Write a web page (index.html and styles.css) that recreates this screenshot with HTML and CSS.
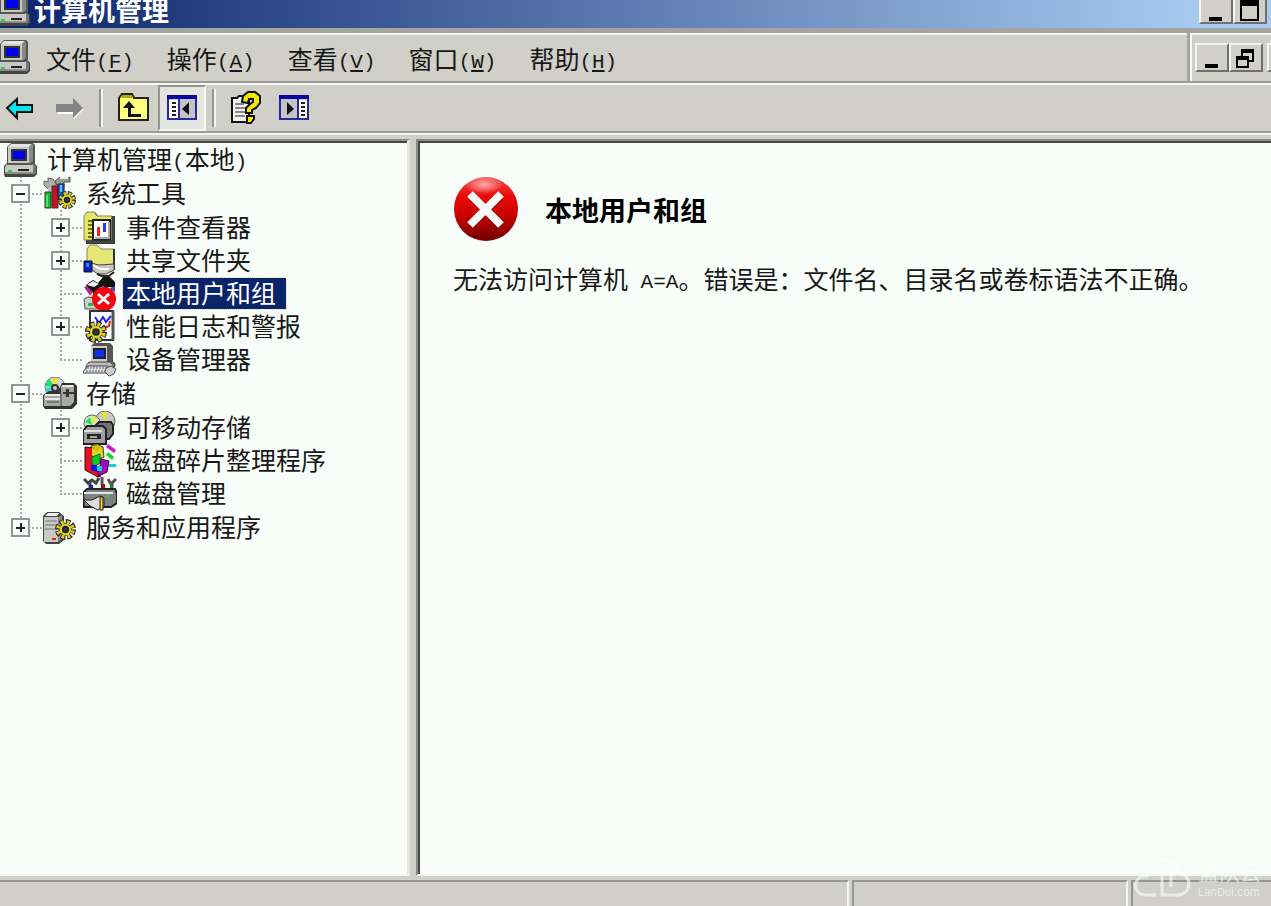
FILE: index.html
```html
<!DOCTYPE html>
<html lang="zh-CN">
  <head>
    <meta charset="UTF-8" />
    <meta name="viewport" content="width=device-width, initial-scale=1.0" />
    <title>计算机管理</title>
    <link rel="stylesheet" href="styles.css">
  </head>
  <body>
    <!-- Shared icon shapes -->
    <svg class="defs" aria-hidden="true">
      <symbol id="computer" viewBox="0 0 34 34">
        <path d="M0 23l3-3h27l3 3v8l-3 3H1l-1-3z" fill="#444" />
        <path d="M1 24l2-3h26v10H1z" fill="#c8c8c4" />
        <path d="M1 29h28v2H1z" fill="#8c8c88" />
        <path d="M29 21l3 2v7l-3 2z" fill="#777" />
        <path d="M3 4l4-4h22l2 2v18l-3 2H3z" fill="#555" />
        <path d="M7 1h21l-3 3H4z" fill="#e4e4e0" />
        <path d="M4 4h21v16H4z" fill="#c8c8c4" />
        <path d="M25 4l4-3v17l-4 3z" fill="#888" />
        <path d="M7 6h16v12H7z" fill="#333" />
        <path d="M9 8h12v8H9z" fill="#0000f4" />
        <path d="M14 26h11v2H14z" fill="#222" />
        <path d="M4 27h4v2H4z" fill="#18d838" />
      </symbol>
      <symbol id="gear" viewBox="0 0 20 20">
        <circle cx="10" cy="10" r="7" fill="none" stroke="#222" stroke-width="6" stroke-dasharray="4 1.500" />
        <circle cx="10" cy="10" r="6" fill="#222" />
        <circle cx="10" cy="10" r="7" fill="none" stroke="#d8cc20" stroke-width="4" stroke-dasharray="2.500 3" stroke-dashoffset="-1" />
        <circle cx="10" cy="10" r="4.500" fill="none" stroke="#e4d820" stroke-width="2" />
        <circle cx="10" cy="10" r="2" fill="#333" />
      </symbol>
      <symbol id="tools" viewBox="0 0 34 34">
        <path d="M1 4l4 1V1l5 1 3 5-2 7-6-2-4-4z" fill="#b0b0b0" stroke="#666" />
        <path d="M12 4l5-4h10v5h-6v6h-6z" fill="#999" stroke="#555" />
        <path d="M17 1h8" stroke="#eee" stroke-width="2" />
        <path d="M5 11h4v18H5z" fill="#c8c8c8" />
        <path d="M2 15h6v16H2z" fill="#18b830" stroke="#333" />
        <path d="M3 18h2v12H3z" fill="#40f060" />
        <path d="M9 9h6v22H9z" fill="#d01020" stroke="#333" />
        <path d="M15 7h6v16h-6z" fill="#1460e0" stroke="#222" />
        <path d="M17 8h2v7h-2z" fill="#70c0ff" />
        <use href="#gear" x="14" y="14" width="20" height="18" />
      </symbol>
      <symbol id="events" viewBox="0 0 34 34">
        <path d="M2 5l3-4h7l3 4h17v28H3z" fill="#333" />
        <path d="M1 5l3-4h7l3 4h15v24H1z" fill="#e6e66c" stroke="#888840" />
        <path d="M10 9h17v20H10z" fill="#fff" stroke="#222" stroke-width="2" />
        <path d="M12 27h14V11" fill="none" stroke="#aaa" stroke-width="2" />
        <path d="M30 5v26H4" fill="none" stroke="#444" stroke-width="3" />
        <path d="M5 10h4m-4 4h4m-4 4h4m-4 4h4m-4 4h4" stroke="#777700" stroke-width="2" />
        <path d="M14 16h3v9h-3z" fill="#f02020" />
        <path d="M20 12h3v9h-3z" fill="#2838f0" />
      </symbol>
      <symbol id="share" viewBox="0 0 34 34">
        <path d="M4 5l3-4h7l4 4h13v20H4z" fill="#e6e676" stroke="#888850" />
        <path d="M31 5v20H14" fill="none" stroke="#333" stroke-width="2" />
        <path d="M8 19l8 2 15-1v6l-8 4h-8l-6-4z" fill="#c8c8c4" stroke="#444" />
        <path d="M10 21l7 4h9" stroke="#fff" stroke-width="2" fill="none" />
        <path d="M1 17h8v11H1z" fill="#0820c8" stroke="#111" />
        <path d="M3 19h3v4H3z" fill="#3080f0" />
        <path d="M14 30l5 2h7l5-4" fill="none" stroke="#222" stroke-width="2" />
      </symbol>
      <symbol id="users" viewBox="0 0 34 34">
        <path d="M3 8l7-5 5 3 5-6h7l5 5v6l-6-1-4 2-7 8-8-4z" fill="#111" />
        <path d="M4 8l6-4 6 3-5 3zM16 11l5-2-6 7z" fill="#eee" />
        <path d="M1 10l3-1 6 6-2 5z" fill="#b02090" />
        <path d="M4 21l6-6v8l-6 3z" fill="#e8e080" />
        <path d="M26 12l6-3v6z" fill="#4848a8" />
        <path d="M1 22l4-2 10 2v10H2z" fill="#ccc" stroke="#555" />
        <path d="M5 26h5v3H5z" fill="#18c838" />
        <circle cx="21" cy="22" r="12" fill="#fc0010" />
        <path d="M15 17l11 10m0-10L15 27" stroke="#fff" stroke-width="3" />
      </symbol>
      <symbol id="perf" viewBox="0 0 34 34">
        <path d="M7 1h23v29H7z" fill="#fff" stroke="#333" stroke-width="2" />
        <path d="M30 1v29" stroke="#555" stroke-width="3" />
        <path d="M12 7l4 6 4-6 3 5 5-6" fill="none" stroke="#2020f0" stroke-width="2" />
        <path d="M27 11l-1 5-5 2v4" fill="none" stroke="#f02020" stroke-width="2" />
        <use href="#gear" x="1" y="11" width="24" height="22" />
      </symbol>
      <symbol id="device" viewBox="0 0 34 34">
        <path d="M8 3l3-3h16l3 3v17H8z" fill="#555" />
        <path d="M8 3h16v16H8z" fill="#ccc" />
        <path d="M10 5h13v11H10z" fill="#222" />
        <path d="M12 7h9v7h-9z" fill="#1030f0" />
        <path d="M6 19h21l3 3v5H3v-4z" fill="#bbb" stroke="#444" />
        <path d="M0 29l5-6h20l2 7H0z" fill="#ddd" stroke="#444" />
        <path d="M4 25h21M3 28h20" stroke="#666" stroke-dasharray="2 1" />
        <path d="M29 19c4 2 3 5 0 6" fill="none" stroke="#555" stroke-width="2" />
        <path d="M23 25l5-2 5 3-2 5-5 2-4-4z" fill="#ccc" stroke="#555" />
      </symbol>
      <symbol id="storage" viewBox="0 0 34 34">
        <circle cx="12" cy="10" r="10" fill="#d4d4d0" stroke="#777" />
        <path d="M12 10L6 2 2 9z" fill="#20e060" />
        <path d="M12 10L9 1h6z" fill="#f0e820" />
        <path d="M12 10L4 16l-2-5z" fill="#20d8e0" />
        <circle cx="12" cy="11" r="3" fill="#ccc" stroke="#333" stroke-width="2" />
        <path d="M0 18l6-4h9l4-8h12l3 3v18l-5 5H2l-2-3z" fill="#333" />
        <path d="M1 18h17V9l13-1v17l-4 4H1z" fill="#a8a8a4" />
        <path d="M2 18h16M2 22h15M19 9h11" stroke="#e8e8e8" stroke-width="2" />
        <path d="M4 25h12M18 17v12" stroke="#777" stroke-width="2" />
        <path d="M20 15h11v2H20zM23 12h3v8h-3z" fill="#333" />
      </symbol>
      <symbol id="removable" viewBox="0 0 34 34">
        <circle cx="22" cy="10" r="10" fill="#c8c8c4" stroke="#666" />
        <path d="M22 10l-4-9h6z" fill="#f0e820" />
        <path d="M22 10l9 5-4 5z" fill="#20d8e8" />
        <circle cx="9" cy="12" r="8" fill="#ddd" stroke="#666" />
        <path d="M9 14L2 11l5-5z" fill="#18e840" />
        <path d="M9 13l1-8 5 2z" fill="#f0e820" />
        <path d="M12 15l4-4h12l2 3v9l-4 5H12z" fill="#777" stroke="#222" stroke-width="2" />
        <path d="M0 20l4-5h16l3 3v15H0z" fill="#a0a0a0" stroke="#222" stroke-width="2" />
        <path d="M1 20h18" stroke="#ddd" stroke-width="2" />
        <path d="M4 23h14v5H4z" fill="#222" />
        <path d="M7 25h7v2H7z" fill="#aaa" />
      </symbol>
      <symbol id="defrag" viewBox="0 0 34 34">
        <path d="M8 2l6-2 6 3 1 10-8 4-5-6z" fill="#c8c010" stroke="#443" />
        <path d="M2 3l8 1v20l8 8-3 1-13-7z" fill="#e81020" stroke="#400" />
        <path d="M9 3l5 5 4-5 2 9-7 5-4-6z" fill="#e0d810" />
        <path d="M9 13l8-3v9l-5 3-3-2z" fill="#10c820" stroke="#064" />
        <path d="M8 21h6v7l-6-2z" fill="#1010f0" />
        <path d="M18 15l8 2-2 11-8 4-2-6 3-4z" fill="#a010b8" stroke="#404" />
        <path d="M14 22h5v5h-5z" fill="#10d0d0" />
        <path d="M25 0l8 6-2 3-8-6z" fill="#c818d0" />
        <path d="M25 8l6 5-2 3-6-5z" fill="#10d828" />
        <path d="M26 20h7v3h-7z" fill="#10d0d8" />
      </symbol>
      <symbol id="diskmgmt" viewBox="0 0 34 34">
        <path d="M1 2l4 4 4-3 4 3 3-5M7 5v9" fill="none" stroke="#444" stroke-width="3" />
        <path d="M25 2l3 5 5-5M29 6v8M19 0v8" fill="none" stroke="#555" stroke-width="3" />
        <path d="M6 8h4v7H6z" fill="#1818e0" />
        <path d="M18 7h4v7h-4z" fill="#a01018" />
        <path d="M27 8h3v6h-3z" fill="#109018" />
        <path d="M0 16l4-4h28l2 4v10l-6 4H1z" fill="#808080" stroke="#222" stroke-width="2" />
        <path d="M1 16h29" stroke="#e4e4e4" stroke-width="2" />
        <path d="M23 18h3v2h-3z" fill="#10e830" />
        <path d="M1 23h8l8-4 4 2v8l-6 4-8-4z" fill="#ddd" stroke="#222" />
        <path d="M17 20h3v13h-3z" fill="#e8d020" stroke="#222" />
      </symbol>
      <symbol id="services" viewBox="0 0 34 34">
        <path d="M0 5l4-4h12l5 4v24l-5 4H3l-3-3z" fill="#444" />
        <path d="M1 6h14v25H1z" fill="#c8c8c4" />
        <path d="M2 5l3-3h11l-2 3z" fill="#eee" />
        <path d="M15 6l4-2v24l-4 3z" fill="#888" />
        <path d="M2 10h12M2 14h12M2 18h12" stroke="#777" />
        <path d="M9 27h4v2H9z" fill="#f02020" />
        <use href="#gear" x="11" y="8" width="23" height="21" />
      </symbol>
    </svg>

    <header class="titlebar">
      <svg class="icon edge"><use href="#computer" /></svg>
      <span class="title">计算机管理</span>
      <div class="winButtons">
        <button aria-label="最小化"><svg class="glyph"><path d="M5 19h13v4H5z" /></svg></button>
        <button aria-label="最大化"><svg class="glyph"><path d="M2 2h19v21H2z" /><path class="hole" d="M4 8h15v13H4z" /></svg></button>
        <button aria-label="关闭"><svg class="glyph"><path d="M4 4l16 16M20 4L4 20" stroke="#000" stroke-width="3" /></svg></button>
      </div>
    </header>

    <nav class="menubar">
      <svg class="icon edge"><use href="#computer" /></svg>
      <div class="menus">
        <button>文件<span class="half">(<u>F</u>)</span></button>
        <button>操作<span class="half">(<u>A</u>)</span></button>
        <button>查看<span class="half">(<u>V</u>)</span></button>
        <button>窗口<span class="half">(<u>W</u>)</span></button>
        <button>帮助<span class="half">(<u>H</u>)</span></button>
      </div>
      <div class="winButtons child">
        <button aria-label="最小化子窗口"><svg class="glyph"><path d="M5 17h13v4H5z" /></svg></button>
        <button aria-label="还原子窗口"><svg class="glyph"><path d="M7 2h13v13h-5v6H2V9h5z" /><path class="hole" d="M9 6h9v7h-3V9H9zM4 13h9v6H4z" /></svg></button>
        <button aria-label="关闭子窗口"><svg class="glyph"><path d="M4 4l16 16M20 4L4 20" stroke="#000" stroke-width="3" /></svg></button>
      </div>
    </nav>

    <div class="toolbar">
      <button aria-label="后退">
        <svg class="icon" viewBox="0 0 34 34"><path d="M4 17L14 8v6h15v7H14v6z" fill="#00e8f0" stroke="#111" stroke-width="2" /></svg>
      </button>
      <button aria-label="前进">
        <svg class="icon" viewBox="0 0 34 34"><path d="M32 18L22 28v-5H6v-2h15z" fill="#fff" /><path d="M31 17L21 7v6H4v8h17v6z" fill="#858585" /></svg>
      </button>
      <span class="sep"></span>
      <button aria-label="向上一级">
        <svg class="icon" viewBox="0 0 34 34"><path d="M3 7l3-4h10l2 4h14v22H3z" fill="#ffff80" stroke="#222" stroke-width="2" /><path d="M6 4h10l1 3H5z" fill="#b0a800" /><path d="M13 10l6 7h-4v6h10v3H12v-9H7z" fill="#111" /></svg>
      </button>
      <button class="pressed" aria-label="显示/隐藏控制台树" aria-pressed="true">
        <svg class="icon" viewBox="0 0 34 34"><path d="M3 5h28v23H3z" fill="#c4c4c8" stroke="#28289c" stroke-width="2" /><path d="M2 4h30v4H2z" fill="#0808a0" /><path d="M4 9h9v18H4z" fill="#fff" /><path d="M14 8v19" stroke="#28289c" stroke-width="2" /><path d="M7 12h4m-4 4h4m-4 4h4m-4 4h4" stroke="#222" stroke-width="2" /><path d="M24 11v13l-7-6z" fill="#111" /></svg>
      </button>
      <span class="sep"></span>
      <button aria-label="帮助">
        <svg class="icon" viewBox="0 0 34 34"><path d="M3 7h5l2-2h10v26H3z" fill="#f4f4f4" stroke="#111" stroke-width="2" /><path d="M6 13h9M6 17h11M6 21h10M6 25h10" stroke="#888" stroke-width="2" /><path d="M13 11l1-6 5-4h7l5 4v7l-4 5-4 2v3h-6v-5l4-4 3-2V8h-4l-1 4z" fill="#f4e800" stroke="#111" stroke-width="2" /><path d="M18 25h7v3l-3 4h-4z" fill="#f4e800" stroke="#111" stroke-width="2" /></svg>
      </button>
      <button aria-label="显示/隐藏操作窗格">
        <svg class="icon" viewBox="0 0 34 34"><path d="M2 5h28v23H2z" fill="#c4c4c8" stroke="#28289c" stroke-width="2" /><path d="M1 4h30v4H1z" fill="#0808a0" /><path d="M21 9h8v18h-8z" fill="#fff" /><path d="M20 8v19" stroke="#28289c" stroke-width="2" /><path d="M23 12h4m-4 4h4m-4 4h4m-4 4h4" stroke="#222" stroke-width="2" /><path d="M9 11v13l7-6z" fill="#111" /></svg>
      </button>
    </div>

    <main class="workspace">
      <!-- Console tree -->
      <nav class="tree">
        <div class="row root">
          <svg class="icon"><use href="#computer" /></svg>
          <a href="#">计算机管理<span class="half">(</span>本地<span class="half">)</span></a>
        </div>
        <ul>
          <li>
            <div class="row">
              <button class="toggle" aria-label="折叠系统工具"></button>
              <svg class="icon"><use href="#tools" /></svg>
              <a href="#">系统工具</a>
            </div>
            <ul>
              <li class="row">
                <button class="toggle plus" aria-label="展开事件查看器"></button>
                <svg class="icon"><use href="#events" /></svg>
                <a href="#">事件查看器</a>
              </li>
              <li class="row">
                <button class="toggle plus" aria-label="展开共享文件夹"></button>
                <svg class="icon"><use href="#share" /></svg>
                <a href="#">共享文件夹</a>
              </li>
              <li class="row leaf">
                <svg class="icon"><use href="#users" /></svg>
                <a href="#" class="selected">本地用户和组</a>
              </li>
              <li class="row">
                <button class="toggle plus" aria-label="展开性能日志和警报"></button>
                <svg class="icon"><use href="#perf" /></svg>
                <a href="#">性能日志和警报</a>
              </li>
              <li class="row leaf">
                <svg class="icon"><use href="#device" /></svg>
                <a href="#">设备管理器</a>
              </li>
            </ul>
          </li>
          <li>
            <div class="row">
              <button class="toggle" aria-label="折叠存储"></button>
              <svg class="icon"><use href="#storage" /></svg>
              <a href="#">存储</a>
            </div>
            <ul>
              <li class="row">
                <button class="toggle plus" aria-label="展开可移动存储"></button>
                <svg class="icon"><use href="#removable" /></svg>
                <a href="#">可移动存储</a>
              </li>
              <li class="row leaf">
                <svg class="icon"><use href="#defrag" /></svg>
                <a href="#">磁盘碎片整理程序</a>
              </li>
              <li class="row leaf">
                <svg class="icon"><use href="#diskmgmt" /></svg>
                <a href="#">磁盘管理</a>
              </li>
            </ul>
          </li>
          <li class="row">
            <button class="toggle plus" aria-label="展开服务和应用程序"></button>
            <svg class="icon"><use href="#services" /></svg>
            <a href="#">服务和应用程序</a>
          </li>
        </ul>
      </nav>

      <!-- Details pane -->
      <section class="details">
        <div class="message">
          <svg class="error" viewBox="0 0 66 66">
            <defs>
              <linearGradient id="ball" x1="0" y1="0" x2="0" y2="1">
                <stop offset="0" stop-color="#f45050" />
                <stop offset="0.300" stop-color="#ec0808" />
                <stop offset="0.600" stop-color="#c80000" />
                <stop offset="1" stop-color="#700000" />
              </linearGradient>
              <radialGradient id="shine">
                <stop offset="0" stop-color="#fff" stop-opacity="0.600" />
                <stop offset="1" stop-color="#fff" stop-opacity="0" />
              </radialGradient>
            </defs>
            <circle cx="33" cy="33" r="32" fill="url(#ball)" />
            <ellipse cx="31" cy="9" rx="19" ry="9" fill="url(#shine)" />
            <path d="M18 20l30 30M48 20L18 50" stroke="#600" stroke-width="8" opacity="0.500" />
            <path d="M17 18l31 31M48 18L17 49" stroke="#f8fcf8" stroke-width="8" />
          </svg>
          <h1>本地用户和组</h1>
        </div>
        <p>无法访问计算机<span class="half"> A=A</span>。错误是：文件名、目录名或卷标语法不正确。</p>
      </section>
    </main>

    <footer class="statusbar">
      <div class="cell wide"></div>
      <div class="cell"></div>
      <div class="cell last"></div>
    </footer>

    <div class="watermark">
      <svg viewBox="0 0 58 40"><path d="M22 37H11a9 9 0 0 1 0-19h2C13 8 20 2 29 2s14 6 16 13M28 14v23h16a11 11 0 0 0 0-22h-7v14" fill="none" stroke="currentColor" stroke-width="3" /></svg>
      <div class="brand"><span>蓝队云</span><small>LanDui.com</small></div>
    </div>
  </body>
</html>
```
FILE: styles.css
```css
:root {
  --face: #d0d0c8;
  --light: #f4f6f0;
  --shadow: #8c8c88;
  --dark: #484848;
  --pane: #f8fdf9;
  --navy: #0a246a;
}
* {
  margin: 0;
  padding: 0;
  box-sizing: border-box;
}

body {
  display: flex;
  flex-direction: column;
  height: 100vh;
  overflow: hidden;
  font-family: "Noto Sans CJK SC", sans-serif;
  font-size: 25px;
  line-height: 33px;
  color: #181818;
  background: var(--face);
}
a {
  text-decoration: none;
  color: inherit;
}
ul {
  list-style: none;
}
button {
  font: inherit;
  color: inherit;
  background: none;
  border: none;
}

.defs {
  position: absolute;
  width: 0;
  height: 0;
}
.icon {
  flex: none;
  display: block;
  width: 34px;
  height: 34px;
}
.edge {
  margin-left: -3px;
}
/* latin characters take half of a chinese one */
.half {
  font-family: "Liberation Mono", monospace;
  font-size: 21px;
  line-height: 1;
  vertical-align: 1px;
  white-space: pre;
}

/* Title bar */
.titlebar {
  flex: none;
  display: flex;
  align-items: center;
  height: 38px;
  margin-top: -10px;
  color: #fff;
  background: linear-gradient(90deg, var(--navy), #a6caf0 94%);
}
.title {
  padding-left: 3px;
  font-size: 27px;
  font-weight: bold;
}
.winButtons {
  display: flex;
  margin-left: auto;
  margin-right: -34px;
}
.winButtons button {
  width: 34px;
  height: 30px;
  padding: 2px 3px;
  background: var(--face);
  border: 2px solid;
  border-color: var(--light) #707070 #707070 var(--light);
}
.winButtons button:last-child {
  margin-left: 4px;
}
.glyph {
  display: block;
  width: 24px;
  height: 24px;
}
.hole {
  fill: var(--face);
}

/* Menu bar */
.menubar {
  flex: none;
  display: flex;
  align-items: center;
  height: 55px;
  border-top: 5px solid #a4a4a2;
  border-bottom: 2px solid #9c9c9a;
  box-shadow: inset 0 2px var(--light);
}
.menus {
  display: flex;
  gap: 33px;
  padding: 2px 0 0 15px;
}
.child {
  align-self: stretch;
  align-items: center;
  margin-right: -30px;
  padding-left: 5px;
  border-left: 3px solid #a4a4a2;
  box-shadow: inset 2px 0 var(--light);
}
.child button {
  height: 29px;
}

/* Toolbar */
.toolbar {
  flex: none;
  display: flex;
  align-items: center;
  gap: 1px;
  height: 50px;
  margin-left: -4px;
  padding-top: 2px;
  border-bottom: 2px solid #9c9c9a;
  box-shadow: inset 0 2px var(--light);
}
.toolbar button {
  display: flex;
  align-items: center;
  justify-content: center;
  width: 48px;
  height: 46px;
}
.toolbar .pressed {
  background: #e4e5df;
  border: 2px solid;
  border-color: #949492 var(--light) var(--light) #949492;
}
.sep {
  width: 4px;
  height: 38px;
  margin: 0 5px;
  border-left: 2px solid #949492;
  border-right: 2px solid var(--light);
}

/* Panes */
.workspace {
  flex: 1;
  display: flex;
  gap: 6px;
  min-height: 0;
  padding: 6px 0 2px;
  box-shadow: inset 0 2px var(--light);
}
.tree,
.details {
  background: var(--pane);
  border-top: 2px solid var(--shadow);
  border-bottom: 2px solid var(--light);
  box-shadow: inset 0 2px var(--dark);
}
.tree {
  flex: none;
  width: 410px;
  padding-top: 2px;
  border-right: 3px solid #e4e6e0;
  overflow: hidden;
}
.details {
  flex: 1;
  padding: 32px 35px;
  border-left: 2px solid var(--shadow);
  box-shadow: inset 2px 2px var(--dark);
}

/* Tree rows, the dotted lines are backgrounds behind the toggles */
.tree ul {
  padding: 1px 0;
  background: repeating-linear-gradient(#aaa 0 2px, transparent 2px 4px) 20px 0 / 2px calc(100% - 17px) no-repeat;
}
.tree ul ul {
  margin-left: 40px;
}
.row {
  display: flex;
  align-items: center;
  height: 33px;
  padding-left: 11px;
  background: repeating-linear-gradient(90deg, #aaa 0 2px, transparent 2px 4px) 20px 16px / 22px 2px no-repeat;
}
.leaf {
  padding-left: 43px;
}
.root {
  padding-left: 4px;
  background: none;
}
.row a {
  height: 31px;
  padding: 0 10px 0 3px;
  margin-left: 6px;
  line-height: 29px;
  white-space: nowrap;
}
.row .selected {
  color: #fff;
  background: var(--navy);
  outline: 1px dotted #e8d890;
}
.toggle {
  flex: none;
  width: 19px;
  height: 19px;
  margin-right: 13px;
  border: 2px solid #949494;
  background: linear-gradient(#222, #222) center / 9px 2px no-repeat, var(--pane);
}
.plus {
  background: linear-gradient(#222, #222) center / 9px 2px no-repeat,
    linear-gradient(#222, #222) center / 2px 9px no-repeat, var(--pane);
}

/* Error message */
.message {
  display: flex;
  align-items: center;
  gap: 26px;
  margin-top: 3px;
}
.error {
  width: 66px;
  height: 66px;
}
h1 {
  font-size: 27px;
  font-weight: bold;
  color: #000;
}
.details p {
  margin-top: 20px;
}

/* Status bar */
.statusbar {
  flex: none;
  display: flex;
  gap: 3px;
  height: 28px;
  padding-top: 2px;
}
.cell {
  flex: 0 0 276px;
  border-top: 2px solid #949492;
  border-left: 2px solid #949492;
  border-right: 2px solid var(--light);
}
.wide {
  flex: 1;
  border-left: none;
}
.last {
  flex-basis: 140px;
  border-right: none;
}

/* Watermark lies over the lower right corner */
.watermark {
  position: absolute;
  right: 10px;
  bottom: 8px;
  display: flex;
  align-items: flex-end;
  gap: 6px;
  color: rgba(255, 255, 255, 0.6);
}
.watermark svg {
  width: 58px;
  height: 40px;
}
.brand {
  display: flex;
  flex-direction: column;
  font-size: 21px;
  line-height: 30px;
}
.brand small {
  font-family: Inter, sans-serif;
  font-size: 11px;
  line-height: 12px;
}
```
